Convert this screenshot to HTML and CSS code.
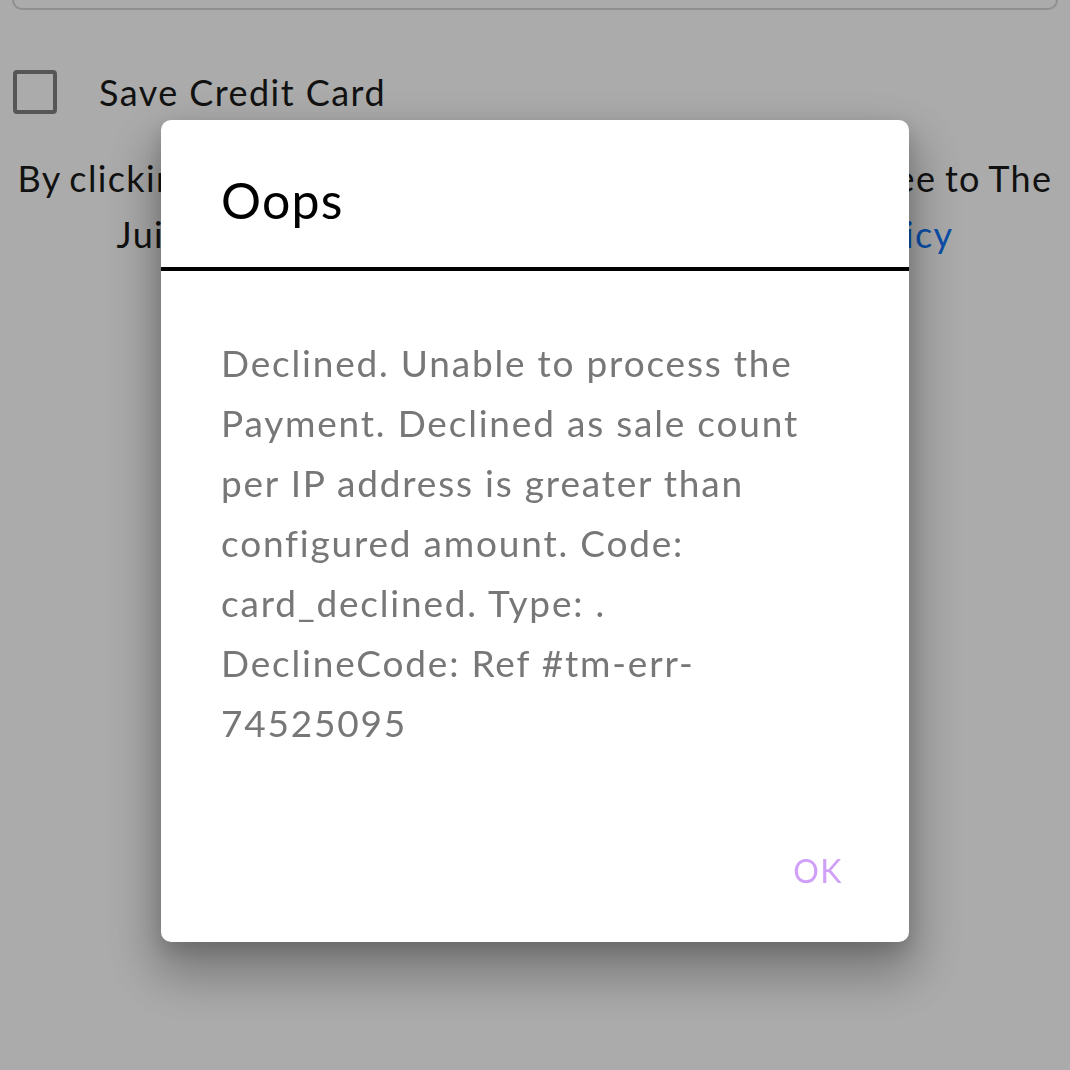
FILE: index.html
```html
<!DOCTYPE html>
<html lang="en">
<head>
<meta charset="utf-8">
<title>Checkout</title>
<link rel="stylesheet" href="styles.css">
</head>
<body>
<main class="page">
  <div class="input-box"></div>
  <label class="save-row">
    <span class="checkbox"></span>
    <span class="save-label">Save Credit Card</span>
  </label>
  <p class="terms"><span class="terms-line terms-l1">By clicking on the Place Order button below, you agree to The</span><span class="terms-line terms-l2">Juicery's Terms of Service and our <a href="#" class="link">Privacy Policy</a></span></p>
</main>
<div class="overlay">
  <div class="dialog" role="dialog">
    <div class="dialog-header">
      <h2 class="dialog-title">Oops</h2>
    </div>
    <div class="dialog-body">
      <p class="dialog-message">Declined. Unable to process the Payment. Declined as sale count per IP address is greater than configured amount. Code: card_declined. Type: . DeclineCode: Ref #tm-err-74525095</p>
    </div>
    <div class="dialog-actions">
      <button class="ok-btn">OK</button>
    </div>
  </div>
</div>
</body>
</html>
```
FILE: styles.css
```css
html, body {
  margin: 0;
  padding: 0;
  background: #ffffff;
  font-family: Lato, "Open Sans", sans-serif;
  overflow: hidden;
}
.page {
  padding: 0 12px;
}
.input-box {
  margin-top: -50px;
  height: 56px;
  border: 2px solid #d6d6d6;
  border-radius: 10px;
}
.save-row {
  display: flex;
  align-items: center;
  margin-top: 60px;
}
.checkbox {
  width: 36px;
  height: 36px;
  border: 4px solid #808080;
  border-radius: 4px;
  margin-left: 1px;
}
.save-label {
  margin-left: 42px;
  font-size: 36px;
  letter-spacing: 1.45px;
  color: #1a1a1a;
}
.terms {
  margin: 36px 0 0;
  text-align: center;
  font-size: 36px;
  letter-spacing: 1.35px;
  line-height: 56px;
  color: #1a1a1a;
  white-space: nowrap;
}
.terms-line {
  display: block;
}
.terms-l1 {
  word-spacing: -2px;
}
.terms-l2 {
  word-spacing: 2px;
}
.link {
  color: #0f76fc;
  text-decoration: none;
}
.overlay {
  position: fixed;
  inset: 0;
  background: rgba(0, 0, 0, 0.33);
  display: flex;
  justify-content: center;
  align-items: flex-start;
  padding-top: 120px;
}
.dialog {
  width: 748px;
  background: #fff;
  border-radius: 10px;
  box-shadow: 0 26px 50px 8px rgba(0,0,0,.3), 0 8px 20px rgba(0,0,0,.15);
  overflow: hidden;
}
.dialog-header {
  height: 147px;
  border-bottom: 4px solid #000;
  padding: 0 60px;
  box-sizing: content-box;
}
.dialog-title {
  margin: 0;
  padding-top: 50px;
  font-size: 50px;
  letter-spacing: 1.2px;
  line-height: 60px;
  font-weight: 400;
  color: #000;
}
.dialog-body {
  padding: 62px 70px 0 60px;
}
.dialog-message {
  margin: 0;
  font-size: 37px;
  letter-spacing: 1.8px;
  line-height: 60px;
  color: #777;
}
.dialog-actions {
  display: flex;
  justify-content: flex-end;
  padding: 98px 66px 51px;
}
.ok-btn {
  border: 0;
  background: none;
  padding: 0;
  font-family: inherit;
  font-size: 32px;
  letter-spacing: 1.5px;
  line-height: 40px;
  color: #d0a0f9;
}
```
